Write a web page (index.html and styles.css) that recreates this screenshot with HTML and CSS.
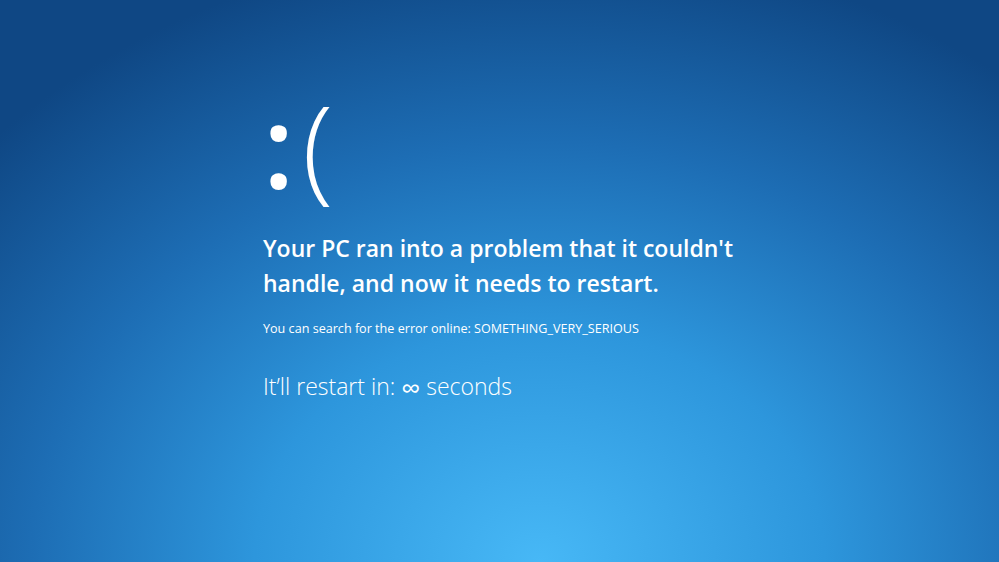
FILE: index.html
```html
<!DOCTYPE html>
<html lang="en">

<head>
  <title>Restart</title>
  <meta charset="utf-8">
  <meta name="viewport" content="width=device-width, initial-scale=1">
  <link rel="stylesheet" href="styles.css">
</head>

<body>
  <main class="crash">
    <div class="face"><span class="eyes">:</span>(</div>
    <h1 class="headline">Your PC ran into a problem that it couldn't<br>handle, and now it needs to restart.</h1>
    <p class="hint">You can search for the error online: SOMETHING_VERY_SERIOUS</p>
    <p class="countdown">It&rsquo;ll restart in: <span class="infinity">&infin;</span> seconds</p>
  </main>
</body>

</html>
```

FILE: styles.css
```css
html,
body {
  height: 100%;
}

body {
  margin: 0;
  overflow: hidden;
  color: #fff;
  font-family: "Open Sans", "Noto Sans", sans-serif;
  background: radial-gradient(ellipse 75% 110% at 54% 100%, #47b8f6 0%, #2d96dc 38%, #1d6db4 68%, #0f4784 100%);
}

.crash {
  padding: 88px 0 0 263px;
}

.face {
  font-size: 114px;
  font-weight: 300;
  line-height: 1;
}

/* the light colon is too thin, give the dots some weight */
.face .eyes {
  font-weight: 600;
  margin-right: 8px;
}

.headline {
  margin: 29px 0 0;
  font-size: 23px;
  font-weight: 600;
  line-height: 35px;
}

.hint {
  margin: 19px 0 0;
  font-size: 12.6px;
}

.countdown {
  margin: 33px 0 0;
  font-size: 23px;
  font-weight: 300;
  line-height: 32px;
}

.countdown .infinity {
  font-size: 27px;
  font-weight: 400;
  line-height: 1;
  vertical-align: -3px;
}
```
